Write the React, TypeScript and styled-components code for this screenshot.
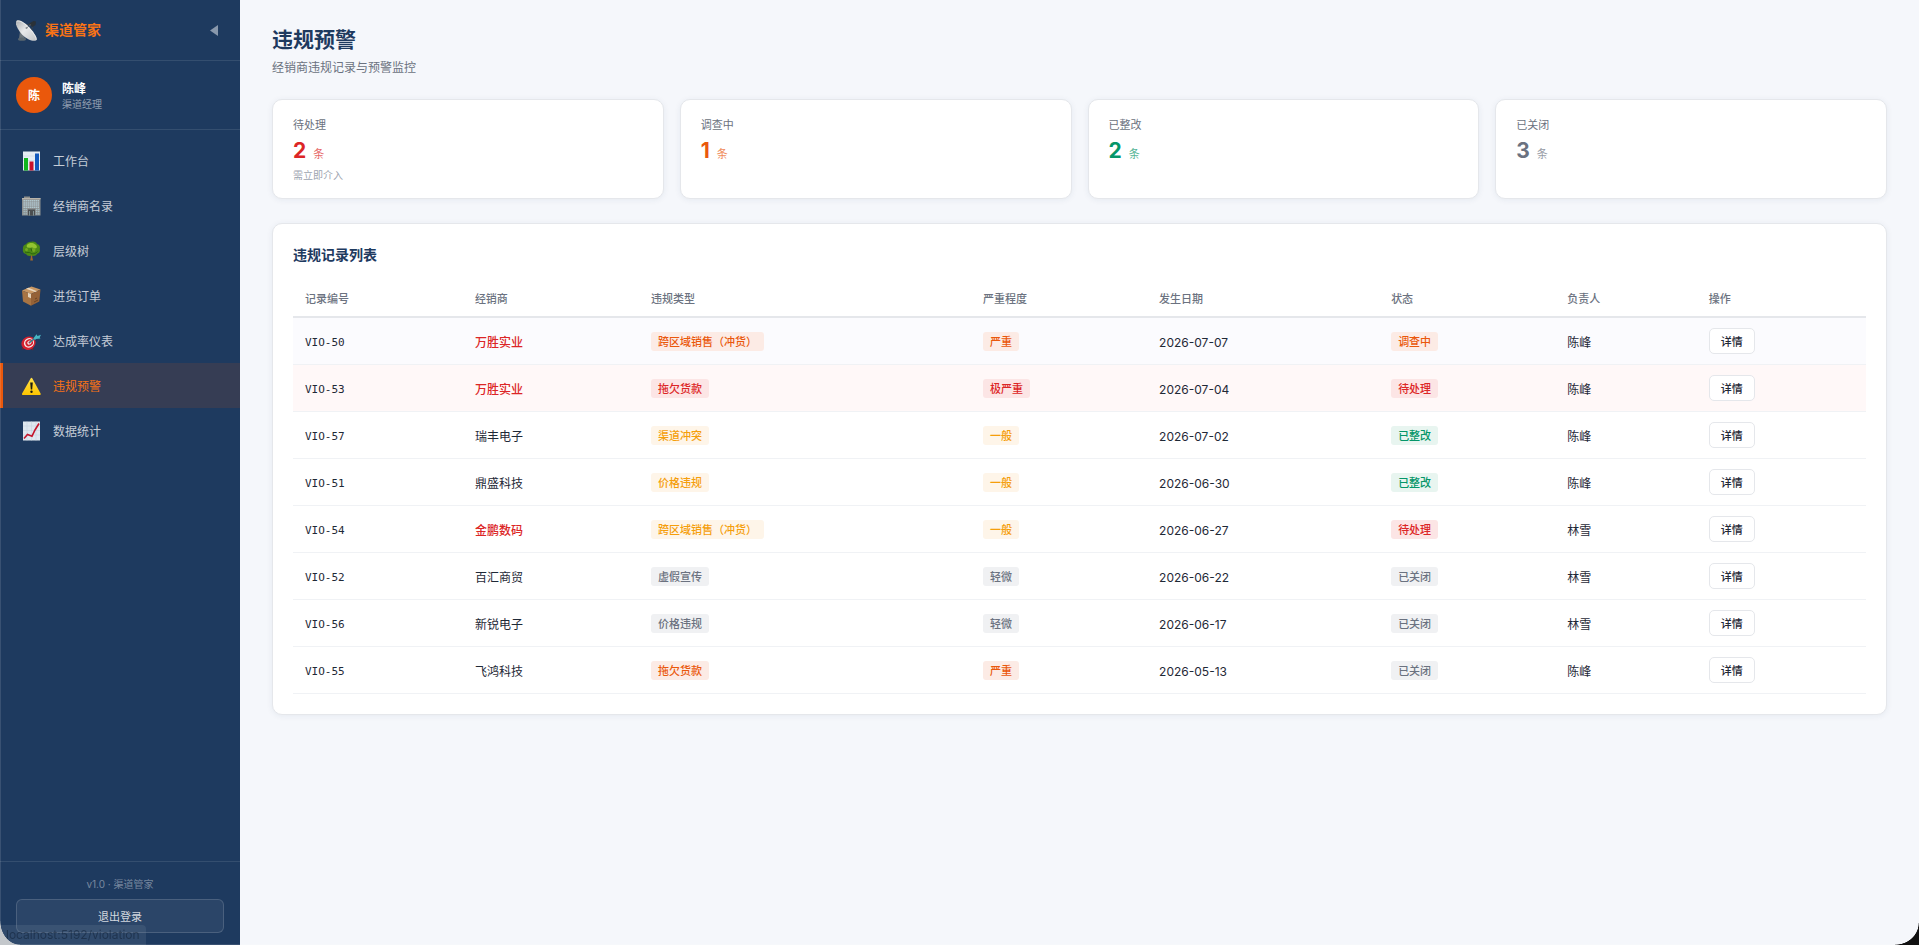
import React from "react";
import styled, { createGlobalStyle } from "styled-components";

const GlobalStyle = createGlobalStyle`
  *, *::before, *::after { box-sizing: border-box; }
  body {
    margin: 0;
    background: #f5f7fb;
    color: #1f2937;
    font-family: Inter, "Noto Sans CJK SC", sans-serif;
    font-size: 12px;
    line-height: 18px;
  }
  button { font-family: inherit; cursor: pointer; }
`;

const Shell = styled.div`
  display: grid;
  grid-template-columns: 240px minmax(0, 1fr);
  min-height: 100vh;
`;

const Sidebar = styled.aside`
  position: sticky;
  top: 0;
  height: 100vh;
  display: flex;
  flex-direction: column;
  background: #1e3a5f;
  color: #ffffff;
`;

const Brand = styled.div`
  display: flex;
  align-items: center;
  gap: 8px;
  height: 61px;
  padding: 0 20px 0 16px;
  border-bottom: 1px solid rgba(255, 255, 255, 0.1);
`;

const BrandName = styled.span`
  flex: 1;
  font-size: 14px;
  font-weight: 700;
  color: #f97316;
`;

const CollapseButton = styled.button`
  display: flex;
  padding: 2px;
  border: 0;
  background: none;
`;

const UserPanel = styled.div`
  display: flex;
  align-items: center;
  gap: 10px;
  padding: 16px;
  border-bottom: 1px solid rgba(255, 255, 255, 0.1);
`;

const Avatar = styled.div`
  display: grid;
  place-items: center;
  width: 36px;
  height: 36px;
  padding-top: 2px;
  border-radius: 50%;
  background: #ea580c;
  font-size: 12px;
  font-weight: 700;
`;

const UserText = styled.div`
  padding-top: 2px;
`;

const UserName = styled.div`
  line-height: 16px;
  font-weight: 600;
`;

const UserRole = styled.div`
  font-size: 10px;
  line-height: 14px;
  color: rgba(255, 255, 255, 0.5);
`;

const Nav = styled.nav`
  flex: 1;
  padding: 8px 0;
`;

const NavItem = styled.a<{ $active?: boolean }>`
  display: flex;
  align-items: center;
  gap: 12px;
  height: 45px;
  padding-left: 18px;
  border-left: 3px solid ${(p) => (p.$active ? "#ea580c" : "transparent")};
  background: ${(p) => (p.$active ? "rgba(234, 88, 12, 0.12)" : "transparent")};
  color: ${(p) => (p.$active ? "#f97316" : "rgba(255, 255, 255, 0.75)")};
  text-decoration: none;
`;

const NavLabel = styled.span`
  padding-top: 2px;
`;

const SideFooter = styled.footer`
  display: flex;
  flex-direction: column;
  gap: 7px;
  padding: 14px 16px 12px;
  border-top: 1px solid rgba(255, 255, 255, 0.1);
`;

const Version = styled.div`
  font-size: 10px;
  line-height: 16px;
  text-align: center;
  color: rgba(255, 255, 255, 0.4);
`;

const LogoutButton = styled.button`
  height: 34px;
  border: 1px solid rgba(255, 255, 255, 0.15);
  border-radius: 6px;
  background: rgba(255, 255, 255, 0.06);
  color: rgba(255, 255, 255, 0.8);
  font-size: 11px;
`;

const Main = styled.main`
  padding: 27px 32px;
`;

const PageTitle = styled.h1`
  margin: 0;
  font-size: 21px;
  line-height: 26px;
  font-weight: 700;
  color: #1e3a5f;
`;

const PageSubtitle = styled.p`
  margin: 6px 0 22px;
  color: #6b7280;
`;

const StatGrid = styled.section`
  display: grid;
  grid-template-columns: repeat(4, minmax(0, 1fr));
  gap: 16px;
  margin-bottom: 24px;
`;

const Card = styled.section`
  padding: 20px;
  border: 1px solid #e5e7eb;
  border-radius: 10px;
  background: #ffffff;
  box-shadow: 0 1px 6px rgba(30, 58, 95, 0.07);
`;

const StatCard = styled(Card).attrs({ as: "article" })`
  padding: 16px 20px 15px;
`;

const StatLabel = styled.div`
  font-size: 11px;
  color: #6b7280;
`;

const StatValue = styled.div<{ $color: string }>`
  display: flex;
  align-items: baseline;
  gap: 7px;
  margin: 5px 0 4px;
  font-size: 21px;
  line-height: 24px;
  font-weight: 700;
  color: ${(p) => p.$color};
`;

const StatUnit = styled.span`
  font-size: 11px;
  line-height: 14px;
  font-weight: 400;
  opacity: 0.7;
`;

const StatHint = styled.div`
  font-size: 10px;
  line-height: 16px;
  color: #9ca3af;
`;

const CardTitle = styled.h2`
  margin: 0 0 14px;
  font-size: 14px;
  line-height: 22px;
  font-weight: 600;
  color: #1e3a5f;
`;

const Table = styled.table`
  width: 100%;
  table-layout: fixed;
  border-collapse: separate;
  border-spacing: 0;
`;

const HeadCell = styled.th<{ $width: string }>`
  width: ${(p) => p.$width};
  height: 38px;
  padding: 2px 12px 0;
  border-bottom: 2px solid #e5e7eb;
  text-align: left;
  font-size: 11px;
  font-weight: 500;
  color: #6b7280;
`;

const rowTints = { plain: "transparent", hover: "#fbfbfe", alert: "#fff8f8" };

const Row = styled.tr<{ $tint: keyof typeof rowTints }>`
  background: ${(p) => rowTints[p.$tint]};
`;

const Cell = styled.td`
  height: 47px;
  padding: 0 12px;
  border-bottom: 1px solid #f0f2f5;
  vertical-align: middle;
  white-space: nowrap;
`;

const TextCell = styled(Cell)<{ $danger?: boolean }>`
  padding-top: 4px;
  color: ${(p) => (p.$danger ? "#dc2626" : "inherit")};
  font-weight: ${(p) => (p.$danger ? 500 : 400)};
`;

const CodeCell = styled(TextCell)`
  font-family: "DejaVu Sans Mono", monospace;
  font-size: 11px;
`;

const tones = {
  red: ["#dc2626", "#fce5e5"],
  orange: ["#ea580c", "#fcebe5"],
  amber: ["#f59e0b", "#fef5e9"],
  green: ["#059669", "#e8f5f0"],
  gray: ["#6b7280", "#f0f1f3"],
};
type Tone = keyof typeof tones;

const Badge = styled.span<{ $tone: Tone }>`
  display: inline-block;
  height: 19px;
  padding: 0 7px;
  border-radius: 3px;
  font-size: 11px;
  line-height: 20px;
  font-weight: 500;
  vertical-align: middle;
  color: ${(p) => tones[p.$tone][0]};
  background: ${(p) => tones[p.$tone][1]};
`;

const DetailButton = styled.button`
  display: block;
  height: 26px;
  padding: 0 11px;
  border: 1px solid #e5e7eb;
  border-radius: 5px;
  background: #ffffff;
  color: #1f2937;
  font-size: 11px;
  font-weight: 500;
`;

const StatusBubble = styled.div`
  position: fixed;
  left: 0;
  bottom: 0;
  height: 20px;
  padding: 0 6px;
  border-top-right-radius: 4px;
  background: rgba(120, 140, 160, 0.2);
  color: rgba(12, 24, 44, 0.45);
  font-size: 12px;
  line-height: 20px;
  pointer-events: none;
`;

const WindowFrame = styled.div`
  position: fixed;
  inset: 0;
  border-left: 1px solid rgba(255, 255, 255, 0.12);
  border-bottom: 1px solid rgba(255, 255, 255, 0.12);
  pointer-events: none;
`;

const WindowCorner = styled.div<{ $side: "left" | "right" }>`
  position: fixed;
  bottom: 0;
  ${(p) => p.$side}: 0;
  width: ${(p) => (p.$side === "left" ? "20px" : "24px")};
  height: ${(p) => (p.$side === "left" ? "24px" : "22px")};
  background: radial-gradient(
    ellipse farthest-side at ${(p) => (p.$side === "left" ? "100%" : "0%")} 0%,
    transparent 97%,
    ${(p) => (p.$side === "left" ? "#c3c7cb" : "#111111")} 100%
  );
  pointer-events: none;
`;

const Icon = ({ size = 20, children }: { size?: number; children: React.ReactNode }) => (
  <svg width={size} height={size} viewBox="0 0 20 20" aria-hidden="true">
    {children}
  </svg>
);

const DishIcon = () => (
  <svg width="21" height="21" viewBox="0 0 21 21" aria-hidden="true">
    <defs>
      <linearGradient id="dish" x1="0" y1="0" x2="1" y2="1">
        <stop offset="0" stopColor="#a9adb0" />
        <stop offset="0.45" stopColor="#e9eaeb" />
        <stop offset="1" stopColor="#bfc2c5" />
      </linearGradient>
    </defs>
    <path d="M4 11 9.500 19H3Z" fill="#6b757c" />
    <ellipse cx="6" cy="19.200" rx="4" ry="1.600" fill="#5a6770" />
    <path d="M8 5.500 17 3.500 15.500 11" fill="none" stroke="#39434b" strokeWidth="1.100" />
    <path d="m13.500 3.200 4-2.200 2.500.5-.5 3.500-3 2-2-1.500Z" fill="#2a3138" />
    <path d="M.5.8C3-1 9 2.500 14 8s8 11 6.300 12.300C18 21.800 11 20 6 14.500S-1.500 2.500.5.800Z" fill="url(#dish)" />
    <path d="M1 1.200C4 0 9 3.500 13.500 8.500s7.500 10 6.500 11.500" fill="none" stroke="#f5f6f6" strokeWidth="0.700" />
    <path d="m10 8.500 5-4" stroke="#626a70" strokeWidth="0.800" />
    <circle cx="10.500" cy="8" r="1" fill="#8b9298" />
  </svg>
);

const BarsIcon = () => (
  <Icon>
    <rect x="2" y="0.500" width="17" height="19" fill="#e6edf4" />
    <path d="M2 5h17M2 9.500h17M2 14h17" stroke="#c6d3df" strokeWidth="0.500" />
    <rect x="3" y="7" width="4" height="12.500" fill="#12b51f" />
    <rect x="8.500" y="10.500" width="4" height="9" fill="#c8102a" />
    <rect x="14" y="2.500" width="4" height="17" fill="#1259bd" />
  </Icon>
);

const BuildingIcon = () => (
  <Icon>
    <rect x="3" y="0.500" width="6" height="2.500" fill="#8f8f8b" />
    <rect x="1" y="2" width="18.500" height="17.500" fill="#8b8f90" />
    <rect x="1" y="2" width="18.500" height="1.300" fill="#b8b3aa" />
    {[4, 6.2, 8.4, 10.6].map((y) => (
      <path key={y} d={`M2.500 ${y + 0.7}H18.500`} stroke="#b4ccd4" strokeWidth="1.500" strokeDasharray="1.400 .6" />
    ))}
    <path d="M2.500 13.500H6M15 13.500h4M2.500 15.700H6M15 15.700h4M2.500 17.900H6M15 17.900h4" stroke="#a3bcc3" strokeWidth="1.300" strokeDasharray="1.400 .6" />
    <rect x="7" y="13.500" width="7" height="6" fill="#4b4e50" />
    <path d="M8.500 15v4.500M12.500 15v4.500" stroke="#8fa5a9" strokeWidth="0.800" />
  </Icon>
);

const TreeIcon = () => (
  <Icon>
    <path d="M9.500 12h2l-.3 4 .8 3.500H9.200l.7-3.500Z" fill="#a5682a" />
    <path d="M10.500.7c3-.7 5 1 5.500 2.300 2.500.5 3.500 3 2.700 5 .8 2-.4 4.300-2.500 4.800-1.200 2-3.700 2.700-5.700 1.700-2 1-4.500.4-5.500-1.500C2.500 12.500 1.300 10.200 2 8 1.500 5.500 3 3.500 5 3.200 6 1.400 8 .4 10.500.700Z" fill="#4c8a16" />
    <path d="M6 4c2-2.500 6-2.500 8-.7 1.500 1 2.500 2.500 1.500 3.700-2 1.500-3-1-5-.5S4.500 7 6 4Z" fill="#93c431" />
    <circle cx="5.500" cy="8.500" r="1.500" fill="#74a820" />
    <circle cx="12.500" cy="9" r="2" fill="#73a921" />
    <path d="M4 11c2 1.500 4-.5 5.500 1s5 1 7-1.500M10 7.500l1 3" fill="none" stroke="#2c6410" strokeWidth="1" />
  </Icon>
);

const BoxIcon = () => (
  <Icon>
    <path d="M1 4.500 10.500.500l9 3L10 8Z" fill="#c99763" />
    <path d="m1 4.500 9 3.500v11.700L2 15.500Z" fill="#a87443" />
    <path d="m19.500 3.500-1.200 12L10 19.700V8Z" fill="#956237" />
    <path d="m5 2.800 9 3.300 2-.8-8.500-3.500Z" fill="#ead8bd" />
    <path d="M7 6.700 10 8v4.300l-3-1.300Z" fill="#e3d2ba" />
    <path d="m13 16 4-2M14 13l2-1" stroke="#5f3c20" strokeWidth="0.800" />
  </Icon>
);

const TargetIcon = () => (
  <Icon>
    <path d="m2.500 16-1 2.500M11 17l1 2" stroke="#8c1921" strokeWidth="1.200" />
    <ellipse cx="7.500" cy="12.200" rx="7.200" ry="6.500" transform="rotate(-28 7.500 12.200)" fill="#d3202e" />
    <ellipse cx="8" cy="11.900" rx="5.200" ry="4.700" transform="rotate(-28 8 11.900)" fill="#f5e9e7" />
    <ellipse cx="8.200" cy="11.800" rx="3.900" ry="3.400" transform="rotate(-28 8.200 11.800)" fill="#d3202e" />
    <ellipse cx="8.400" cy="11.600" rx="2.200" ry="1.900" transform="rotate(-28 8.400 11.600)" fill="#f5e9e7" />
    <circle cx="8.500" cy="11.500" r="0.900" fill="#c01927" />
    <path d="m8.500 11.500 6-4.700" stroke="#268391" strokeWidth="1.300" />
    <path d="m12.500 7.200 3-4 1 1.800L20 3.700l-1.300 2.800.8 1-4.500.5-1 1Z" fill="#48b6c3" />
  </Icon>
);

const WarningIcon = () => (
  <Icon>
    <defs>
      <linearGradient id="warn" x1="0" y1="0" x2="0" y2="1">
        <stop offset="0" stopColor="#ffe04a" />
        <stop offset="1" stopColor="#fdc500" />
      </linearGradient>
    </defs>
    <path d="M9.600 2.500c.5-1 1.300-1 1.800 0l8.200 15c.4.8 0 1.500-.9 1.500H2c-.9 0-1.300-.7-.9-1.500Z" fill="url(#warn)" />
    <path d="M9.200 6.500h2.600l-.6 7H9.800Z" fill="#1c1c10" />
    <circle cx="10.500" cy="15.800" r="1.200" fill="#1c1c10" />
  </Icon>
);

const TrendIcon = () => (
  <Icon>
    <rect x="2" y="0.500" width="17" height="19" fill="#dfe8ef" />
    <path d="M2 5h17M2 9.500h17M2 14h17M6 .5v19M10.500.5v19M15 .5v19" stroke="#c2d0dc" strokeWidth="0.500" />
    <path d="m3 17.500 3.500-4 4.500 1.700L14 9l4-6.500" fill="none" stroke="#c4152b" strokeWidth="1.600" />
  </Icon>
);

const navItems: { label: string; icon: React.ReactNode; active?: boolean }[] = [
  { label: "工作台", icon: <BarsIcon /> },
  { label: "经销商名录", icon: <BuildingIcon /> },
  { label: "层级树", icon: <TreeIcon /> },
  { label: "进货订单", icon: <BoxIcon /> },
  { label: "达成率仪表", icon: <TargetIcon /> },
  { label: "违规预警", icon: <WarningIcon />, active: true },
  { label: "数据统计", icon: <TrendIcon /> },
];

const stats = [
  { label: "待处理", value: 2, color: "#dc2626", hint: "需立即介入" },
  { label: "调查中", value: 1, color: "#ea580c" },
  { label: "已整改", value: 2, color: "#059669" },
  { label: "已关闭", value: 3, color: "#6b7280" },
];

const columns = [
  ["记录编号", "10.8%"],
  ["经销商", "11.2%"],
  ["违规类型", "21.1%"],
  ["严重程度", "11.2%"],
  ["发生日期", "14.75%"],
  ["状态", "11.2%"],
  ["负责人", "9%"],
  ["操作", "10.75%"],
];

const severityTone: Record<string, Tone> = { 极严重: "red", 严重: "orange", 一般: "amber", 轻微: "gray" };
const statusTone: Record<string, Tone> = { 待处理: "red", 调查中: "orange", 已整改: "green", 已关闭: "gray" };

interface Violation {
  id: string;
  dealer: string;
  risky?: boolean;
  type: string;
  severity: string;
  date: string;
  status: string;
  owner: string;
  tint?: keyof typeof rowTints;
}

const violations: Violation[] = [
  { id: "VIO-50", dealer: "万胜实业", risky: true, type: "跨区域销售（冲货）", severity: "严重", date: "2026-07-07", status: "调查中", owner: "陈峰", tint: "hover" },
  { id: "VIO-53", dealer: "万胜实业", risky: true, type: "拖欠货款", severity: "极严重", date: "2026-07-04", status: "待处理", owner: "陈峰", tint: "alert" },
  { id: "VIO-57", dealer: "瑞丰电子", type: "渠道冲突", severity: "一般", date: "2026-07-02", status: "已整改", owner: "陈峰" },
  { id: "VIO-51", dealer: "鼎盛科技", type: "价格违规", severity: "一般", date: "2026-06-30", status: "已整改", owner: "陈峰" },
  { id: "VIO-54", dealer: "金鹏数码", risky: true, type: "跨区域销售（冲货）", severity: "一般", date: "2026-06-27", status: "待处理", owner: "林雪" },
  { id: "VIO-52", dealer: "百汇商贸", type: "虚假宣传", severity: "轻微", date: "2026-06-22", status: "已关闭", owner: "林雪" },
  { id: "VIO-56", dealer: "新锐电子", type: "价格违规", severity: "轻微", date: "2026-06-17", status: "已关闭", owner: "林雪" },
  { id: "VIO-55", dealer: "飞鸿科技", type: "拖欠货款", severity: "严重", date: "2026-05-13", status: "已关闭", owner: "陈峰" },
];

export default function App() {
  return (
    <>
      <GlobalStyle />
      <Shell>
        <Sidebar>
          <Brand>
            <DishIcon />
            <BrandName>渠道管家</BrandName>
            <CollapseButton type="button" aria-label="收起侧栏">
              <svg width="8" height="11" viewBox="0 0 8 11" aria-hidden="true">
                <path d="M8 0v11L0 5.500Z" fill="#8998ac" />
              </svg>
            </CollapseButton>
          </Brand>
          <UserPanel>
            <Avatar>陈</Avatar>
            <UserText>
              <UserName>陈峰</UserName>
              <UserRole>渠道经理</UserRole>
            </UserText>
          </UserPanel>
          <Nav>
            {navItems.map((item) => (
              <NavItem key={item.label} href="#" $active={item.active} aria-current={item.active ? "page" : undefined}>
                {item.icon}
                <NavLabel>{item.label}</NavLabel>
              </NavItem>
            ))}
          </Nav>
          <SideFooter>
            <Version>v1.0 · 渠道管家</Version>
            <LogoutButton type="button">退出登录</LogoutButton>
          </SideFooter>
        </Sidebar>
        <Main>
          <PageTitle>违规预警</PageTitle>
          <PageSubtitle>经销商违规记录与预警监控</PageSubtitle>
          <StatGrid>
            {stats.map((stat) => (
              <StatCard key={stat.label}>
                <StatLabel>{stat.label}</StatLabel>
                <StatValue $color={stat.color}>
                  {stat.value}
                  <StatUnit>条</StatUnit>
                </StatValue>
                {stat.hint && <StatHint>{stat.hint}</StatHint>}
              </StatCard>
            ))}
          </StatGrid>
          <Card>
            <CardTitle>违规记录列表</CardTitle>
            <Table>
              <thead>
                <tr>
                  {columns.map(([label, width]) => (
                    <HeadCell key={label} $width={width} scope="col">
                      {label}
                    </HeadCell>
                  ))}
                </tr>
              </thead>
              <tbody>
                {violations.map((v) => (
                  <Row key={v.id} $tint={v.tint ?? "plain"}>
                    <CodeCell>{v.id}</CodeCell>
                    <TextCell $danger={v.risky}>{v.dealer}</TextCell>
                    <Cell>
                      <Badge $tone={severityTone[v.severity]}>{v.type}</Badge>
                    </Cell>
                    <Cell>
                      <Badge $tone={severityTone[v.severity]}>{v.severity}</Badge>
                    </Cell>
                    <TextCell>{v.date}</TextCell>
                    <Cell>
                      <Badge $tone={statusTone[v.status]}>{v.status}</Badge>
                    </Cell>
                    <TextCell>{v.owner}</TextCell>
                    <Cell>
                      <DetailButton type="button">详情</DetailButton>
                    </Cell>
                  </Row>
                ))}
              </tbody>
            </Table>
          </Card>
        </Main>
      </Shell>
      <StatusBubble>localhost:5192/violation</StatusBubble>
      <WindowFrame />
      <WindowCorner $side="left" />
      <WindowCorner $side="right" />
    </>
  );
}
